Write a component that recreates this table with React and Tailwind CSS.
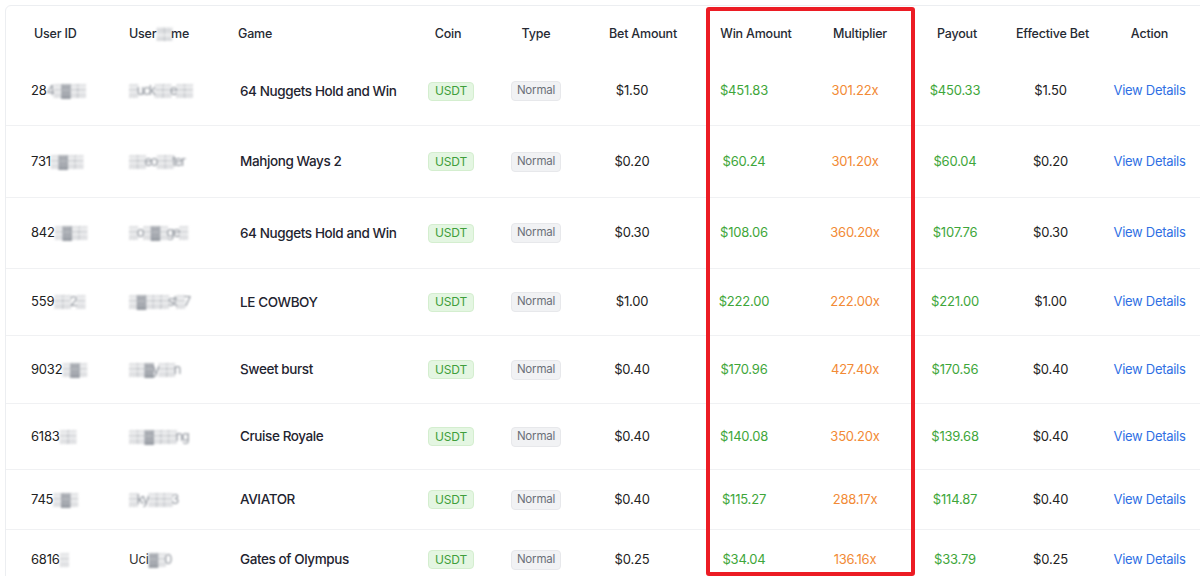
const columns = [
  { key: "id", label: "User ID", w: "w-[104px]", head: "justify-start pl-[28px]", cell: "justify-start pl-[25px]" },
  { key: "user", label: "Username", w: "w-[110px]", head: "justify-start pl-[19px]", cell: "justify-start pl-[19px]" },
  { key: "game", label: "Game", w: "w-[190px]", head: "justify-start pl-[18px]", cell: "justify-start pl-[20px]" },
  { key: "coin", label: "Coin", w: "w-[82px]", head: "justify-center pr-[6px]", cell: "justify-center" },
  { key: "type", label: "Type", w: "w-[88px]", head: "justify-center", cell: "justify-center" },
  { key: "bet", label: "Bet Amount", w: "w-[126px]", head: "justify-center", cell: "justify-center pr-[22px]" },
  { key: "win", label: "Win Amount", w: "w-[100px]", head: "justify-center", cell: "justify-center pr-[24px]" },
  { key: "mult", label: "Multiplier", w: "w-[108px]", head: "justify-center", cell: "justify-center pr-[10px]" },
  { key: "payout", label: "Payout", w: "w-[86px]", head: "justify-center", cell: "justify-center pr-[4px]" },
  { key: "eff", label: "Effective Bet", w: "w-[105px]", head: "justify-center", cell: "justify-center pr-[4px]" },
  { key: "action", label: "Action", w: "w-[95px]", head: "justify-center pr-[6px]", cell: "justify-center pr-[6px]" },
];

const rows = [
  { h: "h-[68px]", id: "28", idBlur: "4▒▓▒▒", userPre: "", user: "▒uck▒▒e▒▒", game: "64 Nuggets Hold and Win", bet: "$1.50", win: "$451.83", mult: "301.22x", payout: "$450.33", eff: "$1.50" },
  { h: "h-[72px]", id: "731", idBlur: "▒▓▒▒", userPre: "", user: "▒▒eo▒▒ter", game: "Mahjong Ways 2", bet: "$0.20", win: "$60.24", mult: "301.20x", payout: "$60.04", eff: "$0.20" },
  { h: "h-[71px]", id: "842", idBlur: "▒▓▒▒", userPre: "", user: "▒o▒▓▒ge▒", game: "64 Nuggets Hold and Win", bet: "$0.30", win: "$108.06", mult: "360.20x", payout: "$107.76", eff: "$0.30" },
  { h: "h-[67px]", id: "559", idBlur: "▒▒2▒", userPre: "", user: "▒▓▒▒▒st▒7", game: "LE COWBOY", bet: "$1.00", win: "$222.00", mult: "222.00x", payout: "$221.00", eff: "$1.00" },
  { h: "h-[68px]", id: "9032", idBlur: "▒▓▒", userPre: "", user: "▒▒▓y▒▒n", game: "Sweet burst", bet: "$0.40", win: "$170.96", mult: "427.40x", payout: "$170.56", eff: "$0.40" },
  { h: "h-[66px]", id: "6183", idBlur: "▒▒", userPre: "", user: "▒▒▓▒▒▒ng", game: "Cruise Royale", bet: "$0.40", win: "$140.08", mult: "350.20x", payout: "$139.68", eff: "$0.40" },
  { h: "h-[60px]", id: "745", idBlur: "▒▓▒", userPre: "", user: "▒ky▒▒▒3", game: "AVIATOR", bet: "$0.40", win: "$115.27", mult: "288.17x", payout: "$114.87", eff: "$0.40" },
  { h: "h-[60px]", id: "6816", idBlur: "▒", userPre: "Uci", user: "▓▒0", game: "Gates of Olympus", bet: "$0.25", win: "$34.04", mult: "136.16x", payout: "$33.79", eff: "$0.25" },
];

const Blurred = ({ children }) => (
  <span className="text-[#8d929a] blur-[1px] tracking-[-1.5px]">{children}</span>
);

const renderCell = (key, row) => {
  switch (key) {
    case "id":
      return (
        <span className="text-[#222]">
          {row.id}
          <Blurred>{row.idBlur}</Blurred>
        </span>
      );
    case "user":
      return (
        <span className="text-[#333]">
          {row.userPre}
          <Blurred>{row.user}</Blurred>
        </span>
      );
    case "game":
      return <span className="text-[13.5px] font-medium tracking-[-0.4px] whitespace-nowrap text-[#1f2430]">{row.game}</span>;
    case "coin":
      return (
        <span className="px-[6px] h-[19px] flex items-center rounded-[4px] bg-[#e4f6e2] border border-[#d4eecf] text-[12px] text-[#3f9e3b]">
          USDT
        </span>
      );
    case "type":
      return (
        <span className="px-[5px] h-[20px] flex items-center rounded-[4px] bg-[#f1f2f4] border border-[#e7e8eb] text-[11.5px] text-[#6b7079]">
          Normal
        </span>
      );
    case "bet":
    case "eff":
      return <span className="text-[#222]">{row[key]}</span>;
    case "win":
    case "payout":
      return <span className="text-[#3ea63a]">{row[key]}</span>;
    case "mult":
      return <span className="text-[#f28a35]">{row.mult}</span>;
    case "action":
      return <span className="text-[#2f6fe4] tracking-[-0.3px]">View Details</span>;
    default:
      return null;
  }
};

export default function App() {
  return (
    <div className="relative w-[1200px] h-[576px] overflow-hidden bg-white" style={{ fontFamily: "Inter, 'Noto Sans', sans-serif" }}>
      <div className="ml-[5px] mt-[5px] w-[1210px] border border-[#eceef1] rounded-[6px] bg-white text-[13px] tracking-[-0.2px]">
        <div className="flex h-[51px] pt-[5px] text-[#262a33] text-[12.5px] font-medium">
          {columns.map((c) => (
            <div key={c.key} className={`${c.w} flex items-center shrink-0 whitespace-nowrap ${c.head}`}>
              {c.label === "Username" ? (
                <span>
                  User<Blurred>▒▒</Blurred>me
                </span>
              ) : (
                c.label
              )}
            </div>
          ))}
        </div>
        {rows.map((row, i) => (
          <div key={i} className={`flex ${row.h} ${i > 0 ? "border-t border-[#f0f1f3]" : ""}`}>
            {columns.map((c) => (
              <div key={c.key} className={`${c.w} flex items-center shrink-0 ${c.cell}`}>
                {renderCell(c.key, row)}
              </div>
            ))}
          </div>
        ))}
      </div>
      <div className="absolute left-[706px] top-[7px] w-[209px] h-[569px] border-[4px] border-[#ec1c24] rounded-[3px] pointer-events-none" />
    </div>
  );
}
